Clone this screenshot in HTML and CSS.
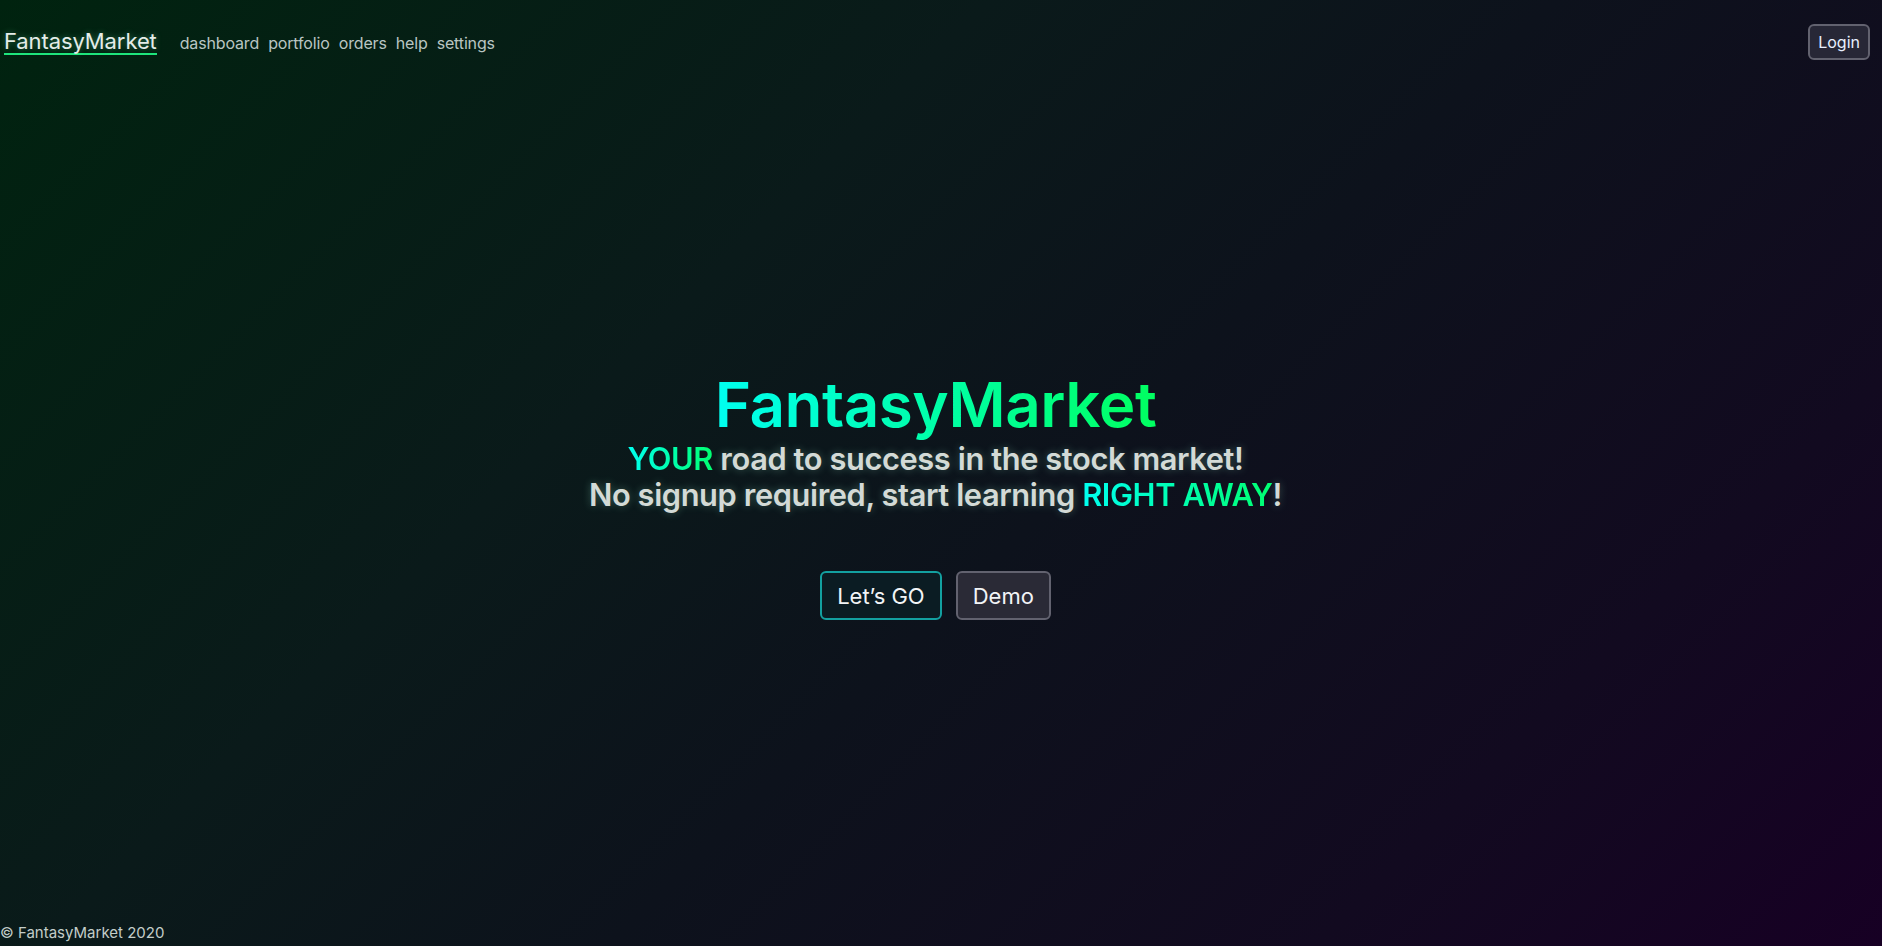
FILE: index.html
```html
<!DOCTYPE html>
<html lang="en">
<head>
<meta charset="utf-8">
<title>FantasyMarket</title>
<link rel="stylesheet" href="styles.css">
</head>
<body>
<div class="page">
  <header class="topbar">
    <nav class="nav">
      <a class="brand" href="#">FantasyMarket</a>
      <a class="nav-link" href="#">dashboard</a>
      <a class="nav-link" href="#">portfolio</a>
      <a class="nav-link" href="#">orders</a>
      <a class="nav-link" href="#">help</a>
      <a class="nav-link" href="#">settings</a>
    </nav>
    <button class="btn btn-login">Login</button>
  </header>
  <main class="hero">
    <h1 class="hero-title"><span class="grad">FantasyMarket</span></h1>
    <p class="hero-sub"><span class="grad-small">YOUR</span> road to success in the stock market!<br>No signup required, start learning <span class="grad-small">RIGHT AWAY</span>!</p>
    <div class="actions">
      <button class="btn btn-go">Let’s GO</button>
      <button class="btn btn-demo">Demo</button>
    </div>
  </main>
  <footer class="footer">© FantasyMarket 2020</footer>
</div>
</body>
</html>
```
FILE: styles.css
```css
* { box-sizing: border-box; }
html, body { margin: 0; padding: 0; height: 100%; }
body {
  font-family: Inter, "Noto Sans", "DejaVu Sans", sans-serif;
  background: linear-gradient(135deg, #00230f 0%, #0a1a1a 35%, #0d121c 55%, #120a20 80%, #170024 100%);
  color: #d6dcd9;
}
.page {
  min-height: 100vh;
  height: 946px;
  display: flex;
  flex-direction: column;
}
.topbar {
  display: flex;
  align-items: center;
  justify-content: space-between;
  padding: 22px 12px 0 4px;
  height: 62px;
}
.nav { display: flex; align-items: baseline; gap: 9px; }
.brand {
  font-size: 22px;
  color: #e4ece8;
  text-decoration: none;
  border-bottom: 2px solid #1fe57c;
  line-height: 24px;
  margin-right: 14px;
  letter-spacing: -0.1px;
  text-shadow: 0 0 6px rgba(120, 255, 190, 0.35);
}
.nav-link {
  font-size: 16px;
  color: #b9c5c2;
  text-decoration: none;
  letter-spacing: -0.15px;
}
.btn {
  font-family: inherit;
  cursor: pointer;
  border-radius: 6px;
  color: #f2f4f6;
}
.btn-login {
  font-size: 16px;
  padding: 0 8px;
  height: 36px;
  background: #272736;
  border: 2px solid #62626f;
  color: #e8f0ff;
}
.hero {
  flex: 1;
  display: flex;
  flex-direction: column;
  align-items: center;
  justify-content: center;
  padding: 4px 11px 0 0;
}
.hero-title {
  margin: 0;
  font-size: 62px;
  font-weight: 600;
  line-height: 72px;
  letter-spacing: -0.5px;
}
.grad {
  background: linear-gradient(90deg, #00fff0 0%, #00ffa8 50%, #00ff60 100%);
  -webkit-background-clip: text;
  background-clip: text;
  color: transparent;
}
.grad-small {
  background: linear-gradient(90deg, #00fff0 0%, #00ff70 100%);
  -webkit-background-clip: text;
  background-clip: text;
  color: transparent;
  text-shadow: none;
}
.hero-sub {
  margin: 0;
  text-align: center;
  font-size: 30.8px;
  font-weight: 600;
  line-height: 36px;
  color: #d3dad6;
  letter-spacing: -0.4px;
  text-shadow: 0 0 8px rgba(160, 255, 220, 0.3);
}
.actions {
  display: flex;
  gap: 14px;
  margin-top: 58px;
}
.btn-go, .btn-demo {
  font-size: 22px;
  height: 49px;
  padding: 0 15px;
}
.btn-go {
  background: #0b1c23;
  border: 2px solid #13a0a0;
}
.btn-demo {
  background: #2a2a36;
  border: 2px solid #62626f;
}
.footer {
  font-size: 15px;
  color: #c3cdc9;
  padding: 0 0 3px 0;
  line-height: 20px;
}
```
